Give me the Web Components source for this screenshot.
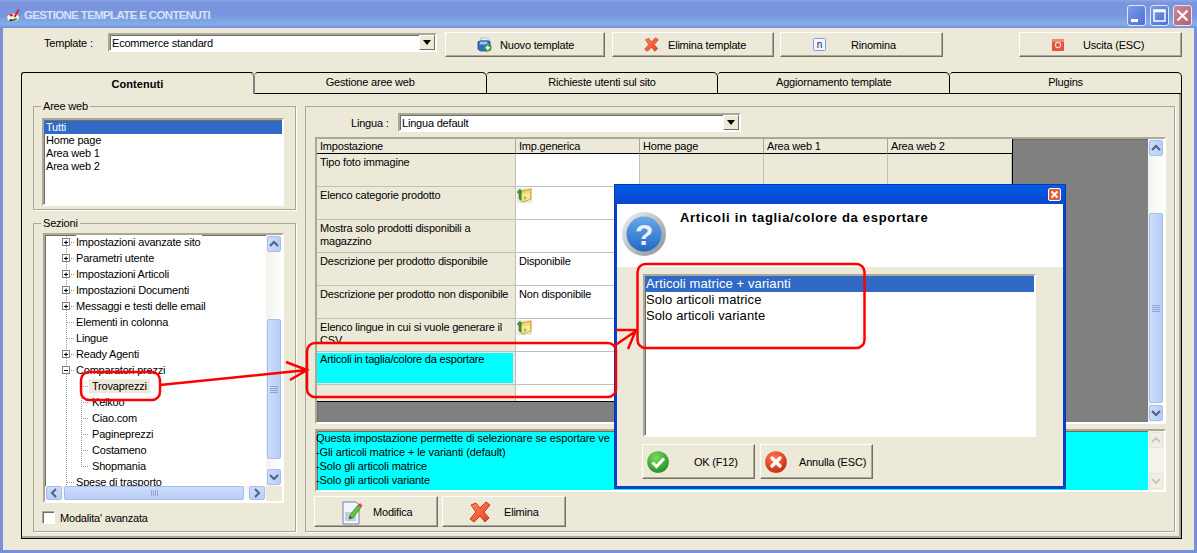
<!DOCTYPE html>
<html lang="it">
<head>
<meta charset="utf-8">
<title>Gestione template e contenuti</title>
<style>
    html, body { margin: 0; padding: 0; background: #7a8fdc; overflow: hidden; }
    body { font: 11px "Liberation Sans", Arial, sans-serif; letter-spacing: -.2px; color: #000; width: 1197px; height: 553px; }
</style>
</head>
<body>
<x-window>
    <x-titlebar>GESTIONE TEMPLATE E CONTENUTI</x-titlebar>

    <x-toolbar>
        <span slot="label">Template :</span>
        <x-combo slot="combo" style="width:329px">Ecommerce standard</x-combo>
        <x-button style="width:160px;height:25px;margin-left:8px;--pad:31px;--gap:8px"><x-icon slot="icon" name="add" size="15"></x-icon>Nuovo template</x-button>
        <x-button style="width:162px;height:25px;margin-left:7px;--pad:31px;--gap:9px"><x-icon slot="icon" name="cross" size="15"></x-icon>Elimina template</x-button>
        <x-button style="width:163px;height:25px;margin-left:6px;--pad:32px;--gap:25px"><x-icon slot="icon" name="rename" size="13"></x-icon>Rinomina</x-button>
        <x-button style="width:163px;height:25px;margin-left:76px;--pad:32px;--gap:19px"><x-icon slot="icon" name="exit" size="12"></x-icon>Uscita (ESC)</x-button>
    </x-toolbar>

    <x-tabs>
        <x-tab active>Contenuti</x-tab>
        <x-tab>Gestione aree web</x-tab>
        <x-tab>Richieste utenti sul sito</x-tab>
        <x-tab>Aggiornamento template</x-tab>
        <x-tab>Plugins</x-tab>
    </x-tabs>

    <x-panel>
        <div slot="left">
            <x-group label="Aree web" style="height:104px;--pad:11px 9px 0 8px">
                <x-list style="width:242px;height:88px;--row:13px;--first:1px;--text:2px">
                    <x-item selected>Tutti</x-item>
                    <x-item>Home page</x-item>
                    <x-item>Area web 1</x-item>
                    <x-item>Area web 2</x-item>
                </x-list>
            </x-group>
            <x-group label="Sezioni" style="height:309px;margin-top:13px;--pad:9px 9px 0 9px">
                <x-tree>
                    <x-node exp="plus">Impostazioni avanzate sito</x-node>
                    <x-node exp="plus">Parametri utente</x-node>
                    <x-node exp="plus">Impostazioni Articoli</x-node>
                    <x-node exp="plus">Impostazioni Documenti</x-node>
                    <x-node exp="plus">Messaggi e testi delle email</x-node>
                    <x-node>Elementi in colonna</x-node>
                    <x-node>Lingue</x-node>
                    <x-node exp="plus">Ready Agenti</x-node>
                    <x-node exp="minus">Comparatori prezzi</x-node>
                    <x-node child selected>Trovaprezzi</x-node>
                    <x-node child>Kelkoo</x-node>
                    <x-node child>Ciao.com</x-node>
                    <x-node child>Pagineprezzi</x-node>
                    <x-node child>Costameno</x-node>
                    <x-node child last>Shopmania</x-node>
                    <x-node>Spese di trasporto</x-node>
                </x-tree>
                <x-check>Modalita' avanzata</x-check>
            </x-group>
        </div>
        <x-group slot="right" style="height:426px;--pad:6px 9px 0 9px">
            <x-lang>
                <span slot="label">Lingua :</span>
                <x-combo slot="combo" style="width:343px">Lingua default</x-combo>
            </x-lang>
            <x-grid></x-grid>
            <x-desc>
                <div>Questa impostazione permette di selezionare se esportare ve</div>
                <div>-Gli articoli matrice + le varianti (default)</div>
                <div>-Solo gli articoli matrice</div>
                <div>-Solo gli articoli variante</div>
            </x-desc>
            <x-actions>
                <x-button style="width:124px;height:31px;--pad:27px;--gap:10px"><x-icon slot="icon" name="edit" size="21"></x-icon>Modifica</x-button>
                <x-button style="width:124px;height:31px;margin-left:4px;--pad:26px;--gap:13px"><x-icon slot="icon" name="cross" size="22"></x-icon>Elimina</x-button>
            </x-actions>
        </x-group>
    </x-panel>

    <x-dialog heading="Articoli in taglia/colore da esportare">
        <x-list style="width:393px;height:163px;--row:16px;--first:0;--text:1px;font-size:13px;letter-spacing:.1px">
            <x-item selected>Articoli matrice + varianti</x-item>
            <x-item>Solo articoli matrice</x-item>
            <x-item>Solo articoli variante</x-item>
        </x-list>
        <x-actions style="margin-top:7px">
            <x-button style="width:113px;height:35px;--pad:4px;--gap:25px"><x-icon slot="icon" name="ok" size="22"></x-icon>OK (F12)</x-button>
            <x-button style="width:113px;height:35px;margin-left:5px;--pad:4px;--gap:12px"><x-icon slot="icon" name="cancel" size="22"></x-icon>Annulla (ESC)</x-button>
        </x-actions>
    </x-dialog>

    <x-marks></x-marks>
</x-window>

<script>
const FACE = '#ece9d8';
const SUNKEN = `
    border: 2px solid; border-color: #aca899 #fff #fff #aca899;
    box-shadow: inset 1px 1px 0 #716f64;
    box-sizing: border-box;
`;

const ICONS = {
    add: `<svg viewBox="0 0 16 16" width="100%" height="100%">
        <path d="M4 1h7l2 2v3H4z" fill="#e8eef8" stroke="#9aa8c0" stroke-width=".7"/>
        <path d="M1 5l3-1h8l2 1v8l-3 2H4l-3-2z" fill="#2c6fc9" stroke="#17468c" stroke-width=".7"/>
        <path d="M3 5h8v3H3z" fill="#9cc6f0"/>
        <circle cx="11.5" cy="11.5" r="4" fill="#2f9a3a"/>
        <path d="M11.5 9v5M9 11.5h5" stroke="#fff" stroke-width="1.6"/>
    </svg>`,
    cross: `<svg viewBox="0 0 22 22" width="100%" height="100%">
        <defs><linearGradient id="xg" x1="0" y1="0" x2="1" y2="1"><stop offset="0" stop-color="#ff8a60"/><stop offset="1" stop-color="#e8401c"/></linearGradient></defs>
        <path d="M2 4l5-2 4 5 6-6 4 3-6 7 5 6-4 4-5-6-6 6-4-3 6-7z" fill="url(#xg)" stroke="#c9361c" stroke-width="1"/>
    </svg>`,
    rename: `<svg viewBox="0 0 13 13" width="100%" height="100%">
        <rect x=".5" y=".5" width="12" height="12" rx="1" fill="#f4f7ff" stroke="#7d9ce0"/>
        <text x="6.5" y="10" text-anchor="middle" font-size="10" font-family="Liberation Sans" fill="#223">n</text>
    </svg>`,
    exit: `<svg viewBox="0 0 12 12" width="100%" height="100%">
        <rect width="12" height="12" rx="1" fill="#e2543c"/>
        <rect width="12" height="3" fill="#f08a70"/>
        <circle cx="6" cy="6" r="2.6" fill="none" stroke="#ffd8c8" stroke-width="1.1"/>
    </svg>`,
    edit: `<svg viewBox="0 0 21 24" width="100%" height="24">
        <path d="M1 1h13l3 3v19H1z" fill="#f2f5fb" stroke="#6c82b0"/>
        <path d="M3 11h11v9H3z" fill="#c3cbe0"/>
        <path d="M7 18l1-4L16 4l3 2.500L11 17z" fill="#66c23c" stroke="#3f7f28" stroke-width=".7"/>
        <path d="M16 4l2-2 2.500 2.500L19 6.500z" fill="#e8453a"/>
        <path d="M7 18l1-3 2 1.500z" fill="#444"/>
    </svg>`,
    folder: `<svg viewBox="0 0 15 15" width="100%" height="100%">
        <rect width="15" height="15" fill="#ece9d8"/>
        <path d="M4 3l6-1 4-1v10l-8 3-2-1z" fill="#f6d765" stroke="#b08a24" stroke-width=".7"/>
        <path d="M5 7l8-2v6l-7 2z" fill="#fbe89a"/>
        <path d="M3 1L0 4l2 2v5l2 1V5l1-1z" fill="#2f9a3a" stroke="#1d6a26" stroke-width=".4"/>
        <path d="M7 8l3 2-3 2z" fill="#7fc060"/>
    </svg>`,
    question: `<svg viewBox="0 0 44 44" width="100%" height="100%">
        <defs>
            <linearGradient id="qr" x1="0" y1="0" x2="1" y2="1"><stop offset="0" stop-color="#f2f2f2"/><stop offset="1" stop-color="#8a8f96"/></linearGradient>
            <linearGradient id="qb" x1="0" y1="0" x2="0" y2="1"><stop offset="0" stop-color="#68a8ea"/><stop offset="1" stop-color="#2069c4"/></linearGradient>
        </defs>
        <circle cx="22" cy="22" r="22" fill="url(#qr)"/>
        <circle cx="22" cy="22" r="17.500" fill="url(#qb)"/>
        <text x="22" y="33" text-anchor="middle" font-size="30" font-weight="bold" font-family="Liberation Sans" fill="#f0f0fa">?</text>
    </svg>`,
    ok: `<svg viewBox="0 0 22 22" width="100%" height="100%">
        <defs><radialGradient id="okg" cx=".4" cy=".3" r=".8"><stop offset="0" stop-color="#7fd95a"/><stop offset="1" stop-color="#178a1f"/></radialGradient></defs>
        <circle cx="11" cy="11" r="10.800" fill="url(#okg)"/>
        <path d="M5.500 11.500l4 4 7.500-8" fill="none" stroke="#fff" stroke-width="3"/>
    </svg>`,
    cancel: `<svg viewBox="0 0 22 22" width="100%" height="100%">
        <defs><radialGradient id="cg" cx=".4" cy=".3" r=".8"><stop offset="0" stop-color="#ff7a50"/><stop offset="1" stop-color="#c8200c"/></radialGradient></defs>
        <circle cx="11" cy="11" r="10.800" fill="url(#cg)"/>
        <path d="M7 7l8 8M15 7l-8 8" stroke="#fff" stroke-width="3.400" stroke-linecap="round"/>
    </svg>`,
    palette: `<svg viewBox="0 0 16 16" width="100%" height="100%">
        <path d="M1 10c0-3 5-5 9-4 3 1 5 3 4 5-1 3-5 4-8 3-2 0-5-1-5-4z" fill="#f4f4f0" stroke="#8a97b8" stroke-width=".5"/>
        <circle cx="6" cy="8" r="1.300" fill="#e8c820"/>
        <path d="M8 9L13 1l1.500 1L10 10z" fill="#e02020"/>
        <path d="M3 7l3-1 2 2-3 1z" fill="#e02020"/>
        <path d="M7 12l4-1 1 1-4 2z" fill="#1f7a30"/>
        <path d="M4 12l3 0 0 2-3 0z" fill="#222"/>
    </svg>`
};

class XIcon extends HTMLElement {
    connectedCallback() {
        if (this.shadowRoot) return;
        const size = this.getAttribute('size') || 16;
        const root = this.attachShadow({mode: 'open'});
        root.innerHTML = `
        <style>
            :host { display: block; width: ${size}px; height: ${size}px; flex: none; }
            svg { display: block; overflow: visible; }
        </style>
        ${ICONS[this.getAttribute('name')]}`;
    }
}

class XWindow extends HTMLElement {
    constructor() {
        super();
        this.attachShadow({mode: 'open'}).innerHTML = `
        <style>
            :host { display: block; position: relative; width: 1197px; height: 553px; background: #7a8fdc; }
            .body { margin: 0 3px; height: 522px; background: ${FACE}; }
        </style>
        <slot name="title"></slot>
        <div class="body"><slot></slot></div>`;
    }
    connectedCallback() {
        const t = this.querySelector('x-titlebar');
        if (t) t.slot = 'title';
    }
}

class XTitlebar extends HTMLElement {
    constructor() {
        super();
        this.attachShadow({mode: 'open'}).innerHTML = `
        <style>
            :host {
                display: flex; align-items: center; height: 28px; padding: 2px 5px 0 6px; box-sizing: border-box;
                background: linear-gradient(#8ba5e8 0, #7a95de 3px, #7895dd 14px, #82ace9 24px, #7a90dc 28px);
                color: #d6e3f7; font: bold 11.5px "Liberation Sans", Arial, sans-serif; letter-spacing: -.65px;
            }
            x-icon { margin-right: 3px; }
            .t { flex: 1; }
            .b {
                width: 17px; height: 19px; margin-left: 4px; border: 1px solid #dfe7fa; border-radius: 3px;
                background: linear-gradient(135deg, #7d9be8, #4a6fd8);
                box-sizing: content-box;
            }
            .b svg { display: block; width: 17px; height: 19px; }
            .x { background: linear-gradient(135deg, #c98a96, #b4606e); }
        </style>
        <x-icon name="palette" size="15"></x-icon>
        <div class="t"><slot></slot></div>
        <div class="b"><svg viewBox="0 0 17 19"><rect x="3" y="13" width="7" height="3" fill="#fff"/></svg></div>
        <div class="b"><svg viewBox="0 0 17 19"><path d="M3 4h11v11H3z M3 5.500h11" fill="none" stroke="#fff" stroke-width="1.500"/></svg></div>
        <div class="b x"><svg viewBox="0 0 17 19"><path d="M3.500 4.500l10 10M13.500 4.500l-10 10" stroke="#fff" stroke-width="2.200"/></svg></div>`;
    }
}

class XToolbar extends HTMLElement {
    constructor() {
        super();
        this.attachShadow({mode: 'open'}).innerHTML = `
        <style>
            :host { display: flex; align-items: flex-start; padding: 4px 0 0 41px; height: 25px; }
            .l { width: 64px; padding-top: 5px; }
            .c { padding-top: 1px; }
        </style>
        <div class="l"><slot name="label"></slot></div>
        <div class="c"><slot name="combo"></slot></div>
        <slot></slot>`;
    }
}

class XCombo extends HTMLElement {
    constructor() {
        super();
        this.attachShadow({mode: 'open'}).innerHTML = `
        <style>
            :host {
                display: flex; height: 19px; background: #fff; ${SUNKEN} align-items: stretch;
            }
            .v { flex: 1; padding-left: 2px; line-height: 16px; white-space: nowrap; }
            .d {
                width: 16px; background: ${FACE}; border: 1px solid; border-color: #fff #716f64 #716f64 #fff;
                box-sizing: border-box; display: flex; align-items: center; justify-content: center;
            }
            .d i { border: 4px solid transparent; border-top: 5px solid #000; border-bottom: 0; }
        </style>
        <div class="v"><slot></slot></div>
        <div class="d"><i></i></div>`;
    }
}

class XButton extends HTMLElement {
    constructor() {
        super();
        this.attachShadow({mode: 'open'}).innerHTML = `
        <style>
            :host {
                display: flex; align-items: center; flex: none; box-sizing: border-box;
                background: ${FACE}; padding-left: var(--pad, 20px); white-space: nowrap;
                border: 1px solid; border-color: #fff #716f64 #716f64 #fff;
                box-shadow: inset -1px -1px 0 #aca899;
            }
            span { margin-left: var(--gap, 8px); }
        </style>
        <slot name="icon"></slot><span><slot></slot></span>`;
    }
}

class XTabs extends HTMLElement {
    constructor() {
        super();
        this.attachShadow({mode: 'open'}).innerHTML = `
        <style>
            :host { display: flex; margin: 15px 0 0 18px; width: 1161px; height: 22px; }
        </style>
        <slot></slot>`;
    }
}

class XTab extends HTMLElement {
    constructor() {
        super();
        this.attachShadow({mode: 'open'}).innerHTML = `
        <style>
            :host {
                flex: 1 1 0; display: flex; align-items: center; justify-content: center; box-sizing: border-box;
                background: ${FACE}; border: solid #000; border-width: 1px 1px 1px 0;
                border-top-right-radius: 5px; border-top-left-radius: 3px; padding-bottom: 2px;
            }
            :host([active]) {
                font-weight: bold; letter-spacing: .05px; border-width: 1px 0 0 1px; padding-bottom: 0;
                border-right: 2px solid #808080;
            }
        </style>
        <slot></slot>`;
    }
}

class XPanel extends HTMLElement {
    constructor() {
        super();
        this.attachShadow({mode: 'open'}).innerHTML = `
        <style>
            :host {
                display: grid; grid-template-columns: 263px 870px; column-gap: 9px; align-content: start;
                box-sizing: border-box; margin-left: 18px; width: 1161px; height: 445px; padding: 12px 0 0 11px;
                border: solid #000; border-width: 0 1px 1px 1px;
                box-shadow: inset -2px -2px 0 #aca899;
            }
        </style>
        <div><slot name="left"></slot></div>
        <div><slot name="right"></slot></div>`;
    }
}

class XGroup extends HTMLElement {
    constructor() {
        super();
        this.attachShadow({mode: 'open'}).innerHTML = `
        <style>
            :host {
                display: block; position: relative; box-sizing: border-box;
                border: 1px solid #aca899; padding: var(--pad, 8px);
                box-shadow: 1px 1px 0 #fff;
            }
            .cap { position: absolute; left: 7px; top: -7px; padding: 0 2px; background: ${FACE}; line-height: 13px; }
            .cap:empty { display: none; }
        </style>
        <div class="cap"></div>
        <slot></slot>`;
    }
    connectedCallback() {
        this.shadowRoot.querySelector('.cap').textContent = this.getAttribute('label') || '';
    }
}

class XList extends HTMLElement {
    constructor() {
        super();
        this.attachShadow({mode: 'open'}).innerHTML = `
        <style>
            :host { display: block; background: #fff; ${SUNKEN} padding-top: var(--first, 0); overflow: hidden; }
        </style>
        <slot></slot>`;
    }
}

class XItem extends HTMLElement {
    constructor() {
        super();
        this.attachShadow({mode: 'open'}).innerHTML = `
        <style>
            :host { display: block; height: var(--row, 13px); line-height: var(--row, 13px); padding-left: var(--text, 2px); white-space: nowrap; }
            :host([selected]) { background: #316ac5; color: #fff; }
        </style>
        <slot></slot>`;
    }
}

const CHEVRONS = {
    up: 'M3 9l4-4 4 4',
    down: 'M3 5l4 4 4-4',
    left: 'M9 3L5 7l4 4',
    right: 'M5 3l4 4-4 4'
};

class XScroll extends HTMLElement {
    constructor() {
        super();
        this.attachShadow({mode: 'open'});
    }
    connectedCallback() {
        const horizontal = this.hasAttribute('horizontal');
        const off = this.hasAttribute('disabled');
        const before = this.getAttribute('before') || 0;
        const after = this.getAttribute('after') || 0;
        const grip = horizontal ? 'M4.500 4v6M6.500 4v6M8.500 4v6M10.500 4v6' : 'M3 4.500h8M3 6.500h8M3 8.500h8M3 10.500h8';
        const color = off ? '#c8c7b8' : '#4d6185';
        this.shadowRoot.innerHTML = `
        <style>
            :host {
                display: flex; flex-direction: ${horizontal ? 'row' : 'column'}; box-sizing: border-box; flex: none;
                background: ${off ? '#f4f3ea' : 'linear-gradient(' + (horizontal ? '180deg' : '90deg') + ', #f3f3ee, #fefefb)'};
                ${horizontal ? 'height: 15px; padding: 0 1px;' : 'width: 16px; padding: 1px 1px;'}
            }
            .btn, .thumb {
                box-sizing: border-box; border-radius: 2px;
                background: ${off ? '#f0efe6' : 'linear-gradient(' + (horizontal ? '180deg' : '90deg') + ', #cddcfa, #b8cdf6)'};
                border: 1px solid ${off ? '#e4e3d8' : '#a6bdf0'};
                display: flex; align-items: center; justify-content: center; flex: none;
            }
            .btn { ${horizontal ? 'width: 16px; height: 14px;' : 'width: 14px; height: 16px;'} }
            .thumb { flex: 1; ${horizontal ? `margin: 0 ${after}px 0 ${before}px; height: 14px;` : `margin: ${before}px 0 ${after}px; width: 14px;`} }
            svg { width: 14px; height: 14px; display: block; flex: none; }
            .a { fill: none; stroke: ${color}; stroke-width: 2; }
            .g { fill: none; stroke: #8ea5d8; stroke-width: 1; }
        </style>
        <div class="btn"><svg viewBox="0 0 14 14"><path class="a" d="${horizontal ? CHEVRONS.left : CHEVRONS.up}"/></svg></div>
        ${off ? '<div style="flex:1"></div>' : `<div class="thumb"><svg viewBox="0 0 14 14"><path class="g" d="${grip}"/></svg></div>`}
        <div class="btn"><svg viewBox="0 0 14 14"><path class="a" d="${horizontal ? CHEVRONS.right : CHEVRONS.down}"/></svg></div>`;
    }
}

class XTree extends HTMLElement {
    constructor() {
        super();
        this.attachShadow({mode: 'open'}).innerHTML = `
        <style>
            :host {
                display: grid; grid-template-columns: 1fr 16px; grid-template-rows: 1fr 15px;
                width: 241px; height: 270px; background: #fff; ${SUNKEN}
            }
            .rows { overflow: hidden; }
            .inner { margin-top: -1px; }
            .corner { background: ${FACE}; }
        </style>
        <div class="rows"><div class="inner"><slot></slot></div></div>
        <x-scroll before="67" after="10"></x-scroll>
        <x-scroll horizontal before="2" after="5"></x-scroll>
        <div class="corner"></div>`;
    }
}

class XNode extends HTMLElement {
    constructor() {
        super();
        this.attachShadow({mode: 'open'});
    }
    connectedCallback() {
        const exp = this.getAttribute('exp');
        const mark = exp
            ? `<svg width="8" height="8" viewBox="0 0 8 8"><rect x=".5" y=".5" width="7" height="7" fill="#fff" stroke="#808080"/><path d="${exp === 'plus' ? 'M2 4.500h4M4 2.500v4' : 'M2 4.500h4'}" stroke="#000"/></svg>`
            : '';
        const dots = 'repeating-linear-gradient(90deg,#999 0 1px,transparent 1px 2px)';
        const dotsV = 'repeating-linear-gradient(#999 0 1px,transparent 1px 2px)';
        const child = this.hasAttribute('child');
        const last = this.hasAttribute('last');
        const lines = child
            ? `${dots} 36px 8px/8px 1px no-repeat, ${dotsV} 36px 0/1px ${last ? 8 : 16}px no-repeat, ${dotsV} 21px 0/1px 16px no-repeat`
            : `${dots} 22px 8px/8px 1px no-repeat, ${dotsV} 21px 0/1px 16px no-repeat`;
        this.shadowRoot.innerHTML = `
        <style>
            :host {
                display: flex; align-items: center; height: 16px; white-space: nowrap;
                padding-left: ${child ? 44 : exp ? 17 : 31}px; background: ${lines};
            }
            svg { display: block; margin-right: 6px; flex: none; background: #fff; }
            span { line-height: 14px; padding: 0 2px 0 0; background: #fff; }
            :host([selected]) span { background: ${FACE}; padding: 0 3px; }
            :host([child]:not([selected])) span { margin-left: 3px; }
        </style>
        ${mark}<span><slot></slot></span>`;
    }
}

class XCheck extends HTMLElement {
    constructor() {
        super();
        this.attachShadow({mode: 'open'}).innerHTML = `
        <style>
            :host { display: flex; align-items: center; margin: 8px 0 0 -1px; }
            i { display: block; width: 13px; height: 13px; background: #fff; ${SUNKEN} margin-right: 5px; border-width: 1px; }
        </style>
        <i></i><slot></slot>`;
    }
}

class XLang extends HTMLElement {
    constructor() {
        super();
        this.attachShadow({mode: 'open'}).innerHTML = `
        <style>
            :host { display: flex; align-items: center; padding-left: 36px; height: 19px; }
            .l { width: 47px; }
        </style>
        <div class="l"><slot name="label"></slot></div>
        <slot name="combo"></slot>`;
    }
}

class XGrid extends HTMLElement {
    constructor() {
        super();
        const head = ['Impostazione', 'Imp.generica', 'Home page', 'Area web 1', 'Area web 2'];
        const rows = [
            ['Tipo foto immagine', ''],
            ['Elenco categorie prodotto', '<x-icon name="folder" size="15"></x-icon>'],
            ['Mostra solo prodotti disponibili a magazzino', ''],
            ['Descrizione per prodotto disponibile', 'Disponibile'],
            ['Descrizione per prodotto non disponibile', 'Non disponibile'],
            ['Elenco lingue in cui si vuole generare il CSV', '<x-icon name="folder" size="15"></x-icon>'],
            ['Articoli in taglia/colore da esportare', ''],
            ['', '']
        ];
        const tail = '<div class="c"></div><div class="c"></div><div class="c"></div>';
        const body = rows.map((r, i) => `
            <div class="c lab ${i === 6 ? 'hit' : ''} ${i === 7 ? 'end' : ''}">${i === 6 ? `<div>${r[0]}</div>` : r[0]}</div>
            <div class="c val ${i === 7 ? 'end' : ''} ${r[1].startsWith('<') ? 'pic' : ''}">${r[1]}</div>${tail}`).join('');
        this.attachShadow({mode: 'open'}).innerHTML = `
        <style>
            :host { display: flex; margin-top: 5px; width: 851px; height: 287px; background: #808080; ${SUNKEN} }
            .main { flex: 1; overflow: hidden; }
            .tb {
                display: grid; width: 696px; box-sizing: border-box; border-right: 1px solid #000; border-bottom: 1px solid #000;
                grid-template-columns: 199px repeat(4, 124px); grid-template-rows: 15px repeat(7, 33px) 16px;
                background: ${FACE};
            }
            .h { border-right: 1px solid #aca899; border-bottom: 1px solid #000; padding-left: 3px; line-height: 14px; box-sizing: border-box; }
            .h:nth-child(5) { border-right: 0; }
            .c { border-right: 1px solid #bfbfbf; border-bottom: 1px solid #bfbfbf; padding: 2px 0 0 3px; line-height: 13px; overflow: hidden; box-sizing: border-box; }
            .val { background: #fff; }
            .pic { padding: 1px 0 0 1px; }
            .hit { padding: 1px 2px 1px 0; }
            .hit div { background: #0ff; height: 100%; padding-left: 3px; }
            .end { border-bottom: 0; }
        </style>
        <div class="main"><div class="tb">${head.map(h => `<div class="h">${h}</div>`).join('')}${body}</div></div>
        <x-scroll before="57" after="2"></x-scroll>`;
    }
}

class XDesc extends HTMLElement {
    constructor() {
        super();
        this.attachShadow({mode: 'open'}).innerHTML = `
        <style>
            :host { display: flex; margin-top: 5px; width: 851px; height: 63px; background: #0ff; ${SUNKEN} line-height: 14px; letter-spacing: -.1px; }
            .t { flex: 1; margin-left: -1px; white-space: nowrap; overflow: hidden; }
        </style>
        <div class="t"><slot></slot></div>
        <x-scroll disabled></x-scroll>`;
    }
}

class XActions extends HTMLElement {
    constructor() {
        super();
        this.attachShadow({mode: 'open'}).innerHTML = `
        <style>
            :host { display: flex; margin: 4px 0 0 -1px; font-size: 11px; letter-spacing: -.2px; }
        </style>
        <slot></slot>`;
    }
}

class XDialog extends HTMLElement {
    constructor() {
        super();
        this.attachShadow({mode: 'open'});
    }
    connectedCallback() {
        this.shadowRoot.innerHTML = `
        <style>
            :host {
                position: absolute; left: 614px; top: 184px; width: 452px; height: 305px; box-sizing: border-box;
                display: flex; flex-direction: column; background: ${FACE};
                border: 3px solid #0a3fd4; border-top: 0; outline: 1px solid #003cb0; outline-offset: -1px;
            }
            .bar {
                height: 20px; flex: none; margin: 0 -3px; display: flex; justify-content: flex-end; align-items: center;
                padding: 0 5px; background: linear-gradient(#0a5ee8 0, #0058e6 4px, #0a4edb 12px, #0549d0 20px);
            }
            .close {
                width: 13px; height: 13px; box-sizing: border-box; border: 1px solid #fff; border-radius: 2px;
                background: #e2603c;
            }
            .close svg { display: block; }
            .top { height: 63px; flex: none; background: #fff; display: flex; padding: 8px 0 0 5px; box-sizing: border-box; }
            .head { font: bold 13px "Liberation Sans", Arial, sans-serif; margin: -2px 0 0 14px; letter-spacing: .7px; line-height: 16px; }
            .in { padding: 7px 0 0 26px; }
        </style>
        <div class="bar"><div class="close"><svg width="11" height="11" viewBox="0 0 11 11"><path d="M2.500 2.500l6 6M8.500 2.500l-6 6" stroke="#fff" stroke-width="1.800"/></svg></div></div>
        <div class="top"><x-icon name="question" size="44"></x-icon><div class="head">${this.getAttribute('heading')}</div></div>
        <div class="in"><slot></slot></div>`;
    }
}

class XMarks extends HTMLElement {
    constructor() {
        super();
        this.attachShadow({mode: 'open'}).innerHTML = `
        <style>
            :host { position: absolute; left: 0; top: 0; width: 1197px; height: 553px; pointer-events: none; }
            svg { display: block; }
            rect, path { fill: none; stroke: #f00; stroke-width: 2.500; }
        </style>
        <svg width="1197" height="553" viewBox="0 0 1197 553">
            <rect x="81" y="372" width="79" height="28" rx="8"/>
            <path d="M160 385L307 370M286 362l21 8-17 10"/>
            <rect x="307" y="343" width="309" height="54" rx="8"/>
            <path d="M614 346l22-15M616 330h20l-8 19"/>
            <rect x="637.500" y="264" width="227" height="84" rx="8"/>
        </svg>`;
    }
}

customElements.define('x-icon', XIcon);
customElements.define('x-window', XWindow);
customElements.define('x-titlebar', XTitlebar);
customElements.define('x-toolbar', XToolbar);
customElements.define('x-combo', XCombo);
customElements.define('x-button', XButton);
customElements.define('x-tabs', XTabs);
customElements.define('x-tab', XTab);
customElements.define('x-panel', XPanel);
customElements.define('x-group', XGroup);
customElements.define('x-list', XList);
customElements.define('x-item', XItem);
customElements.define('x-scroll', XScroll);
customElements.define('x-tree', XTree);
customElements.define('x-node', XNode);
customElements.define('x-check', XCheck);
customElements.define('x-lang', XLang);
customElements.define('x-grid', XGrid);
customElements.define('x-desc', XDesc);
customElements.define('x-actions', XActions);
customElements.define('x-dialog', XDialog);
customElements.define('x-marks', XMarks);
</script>
</body>
</html>
